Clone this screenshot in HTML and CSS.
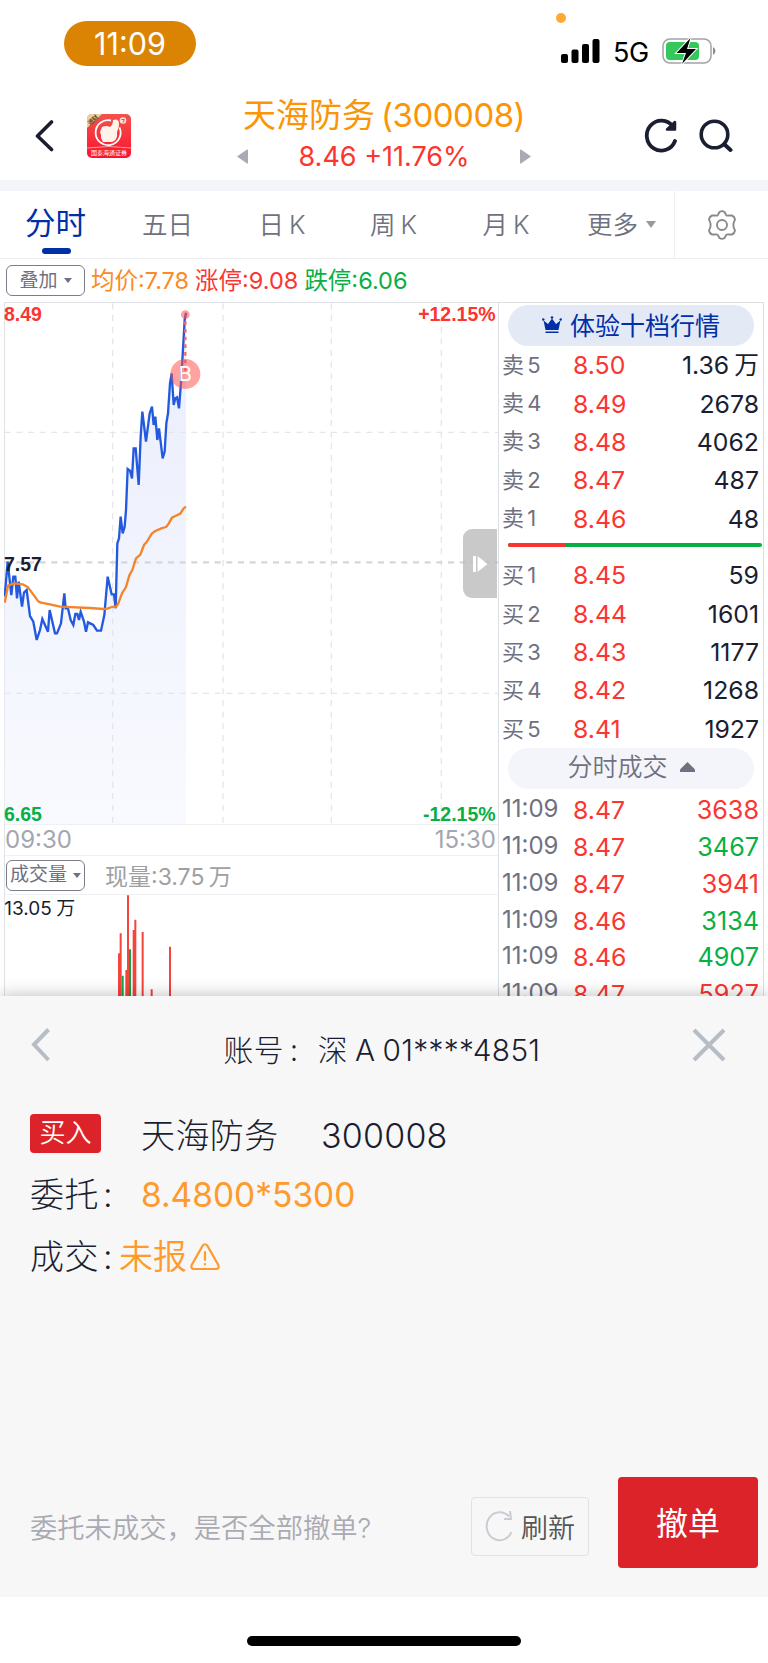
FILE: index.html
```html
<!DOCTYPE html>
<html lang="zh-CN">
<head>
    <meta charset="UTF-8">
    <meta name="viewport" content="width=device-width, initial-scale=1.0">
    <title>天海防务(300008)</title>
    <link rel="stylesheet" href="styles.css">
</head>
<body>

    <div class="status">
        <div class="clock">11:09</div>
        <i class="mic-dot"></i>
        <div class="status-right">
            <svg class="signal" width="39" height="25" viewBox="0 0 39 25">
                <rect x="0" y="15" width="7" height="9" rx="2"/>
                <rect x="10.500" y="10.500" width="7" height="13.500" rx="2"/>
                <rect x="21" y="5" width="7" height="19" rx="2"/>
                <rect x="31.500" y="0" width="7" height="24" rx="2"/>
            </svg>
            <span class="net">5G</span>
            <svg width="55" height="28" viewBox="0 0 55 28">
                <rect x="1" y="2" width="48" height="24" rx="7" fill="#fff" stroke="#a3a3a3" stroke-width="1.500"/>
                <rect x="4" y="5" width="33" height="18" rx="4" fill="#34c759"/>
                <path d="M51 10a4.500 4.500 0 0 1 0 8z" fill="#8c8c8c"/>
                <path d="M28.500 1 14.500 16h9.500l-4 11 14-15h-9z" fill="#000" stroke="#fff" stroke-width="2" paint-order="stroke"/>
            </svg>
        </div>
    </div>

    <header class="header">
        <div class="header-left">
            <svg width="20" height="34" viewBox="0 0 20 34"><path d="M17.500 3 3.500 17l14 13.500" class="ink" stroke-width="3.600"/></svg>
            <svg width="44" height="44" viewBox="0 0 44 44">
                <defs>
                    <linearGradient id="logoBg" x1="0" y1="0" x2="0" y2="1">
                        <stop offset="0" stop-color="#f4524b"/><stop offset="1" stop-color="#f9142d"/>
                    </linearGradient>
                    <clipPath id="logoClip"><rect width="44" height="44" rx="5"/></clipPath>
                </defs>
                <g clip-path="url(#logoClip)">
                    <rect width="44" height="44" fill="url(#logoBg)"/>
                    <path d="M0 0h15L0 14z" fill="#ecd3a4"/>
                    <path d="M24 6.500a12.500 12.500 0 1 0 8.500 7" fill="none" stroke="#fff" stroke-width="1.800"/>
                    <path d="M15 13q4-2 8 0 3-2 3-7 6-2 6 4 0 4-2 8 1 8-5 10h-9l-2-4v-3l-1-3z" fill="#fff4ec"/>
                    <circle cx="36" cy="6.500" r="3.300" fill="#ffdada"/>
                    <path d="M34.500 5.500h3L36 8.500" stroke="#f4524b" fill="none"/>
                    <path d="M0 34q22-3 44 0" fill="none" stroke="#ff9c9c"/>
                </g>
                <text x="6" y="8" class="logo-tag" transform="rotate(-43 6 6)">通财</text>
                <text x="22" y="41.300" class="logo-name">国泰海通证券</text>
            </svg>
        </div>
        <div class="title">
            <h1>天海防务<span>(300008)</span></h1>
            <div class="quote">
                <svg width="12" height="15" viewBox="0 0 12 15"><path d="M0 7.500 10 .5q1-.5 1 1v12q0 1.500-1 1z" fill="#a9aab2"/></svg>
                <span>8.46 +11.76%</span>
                <svg width="12" height="15" viewBox="0 0 12 15"><path d="M12 7.500 2 .5q-1-.5-1 1v12q0 1.500 1 1z" fill="#a9aab2"/></svg>
            </div>
        </div>
        <div class="header-right">
            <svg width="34" height="36" viewBox="0 0 34 36">
                <path d="M31 23A14.600 15 0 1 1 29 8.500" class="ink" stroke-width="3.800"/>
                <path d="M31 4v7.500h-8z" fill="#1a1e30" stroke="#1a1e30" stroke-width="2.500" stroke-linejoin="round"/>
            </svg>
            <svg width="34" height="34" viewBox="0 0 34 34">
                <circle cx="15.500" cy="15.500" r="13.300" class="ink" stroke-width="3.600"/>
                <path d="m25.500 25.500 6 5.500" class="ink" stroke-width="4"/>
            </svg>
        </div>
    </header>

    <nav class="tabs">
        <a class="tab active">分时</a>
        <a class="tab">五日</a>
        <a class="tab">日 K</a>
        <a class="tab">周 K</a>
        <a class="tab">月 K</a>
        <a class="tab more">更多<svg width="10" height="7" viewBox="0 0 10 7"><path d="M0 0h10L5 7z" fill="#999"/></svg></a>
        <a class="settings">
            <svg width="30" height="30" viewBox="0 0 30 30" fill="none" stroke="#8a8a8a" stroke-width="1.900">
                <path d="M12.500 2Q15 .2 17.500 2L19 4.800Q20 6 22 5.500L25 5.500Q27.500 6.500 28 9.500L26.800 12.500Q26 15 26.800 17.500L28 20.500Q27.500 23.500 25 24.500L22 24.500Q20 24 19 25.200L17.500 28Q15 29.800 12.500 28L11 25.200Q10 24 8 24.500L5 24.500Q2.500 23.500 2 20.500L3.200 17.500Q4 15 3.200 12.500L2 9.500Q2.500 6.500 5 5.500L8 5.500Q10 6 11 4.800Z"/>
                <circle cx="15" cy="15" r="5"/>
            </svg>
        </a>
    </nav>

    <div class="info">
        <button class="pick">叠加<svg width="8" height="5" viewBox="0 0 8 5"><path d="M0 0h8L4 5z"/></svg></button>
        <span class="avg">均价:7.78</span>
        <span class="up">涨停:9.08</span>
        <span class="down">跌停:6.06</span>
    </div>

    <main class="market">
        <section class="charts">
            <!-- intraday price chart, 3 units per pixel -->
            <svg class="price-chart" width="494" height="522" viewBox="12 6 1482 1566">
                <defs>
                    <linearGradient id="area" x1="0" y1="0" x2="0" y2="1">
                        <stop offset="0" stop-color="#eaeefc"/><stop offset="1" stop-color="#f9faff"/>
                    </linearGradient>
                </defs>
                <path fill="url(#area)" d="M14 890 23 785 34 885 40 830 46 830 51 895 56 845 66 920 72 878 80 870 90 948 100 965 110 1020 120 990 127 957 144 995 149 930 165 1000 171 1000 183 970 193 880 197 925 204 925 212 960 220 975 226 942 232 942 237 960 242 935 252 965 258 995 264 967 280 975 291 992 303 992 313 945 323 830 335 883 342 883 347 925 352 730 357 715 362 650 368 700 374 680 378 630 383 507 390 512 396 535 401 445 407 445 416 555 422 410 427 335 438 425 449 340 456 320 461 375 466 350 472 420 477 385 488 475 494 455 499 370 504 340 510 250 515 220 521 315 526 295 531 292 537 325 544 235 554 60 558 38V1572H14z"/>
                <g class="grid">
                    <path d="M338 10V1572M669 10V1572M994 10V1572M1324 10V1572" stroke-dasharray="18 17"/>
                    <path d="M14 397H1494M14 1180H1494" stroke-dasharray="18 17"/>
                    <path d="M14 787H1494" class="mid" stroke-dasharray="18 17"/>
                </g>
                <polyline class="line price" points="14,890 23,785 34,885 40,830 46,830 51,895 56,845 66,920 72,878 80,870 90,948 100,965 110,1020 120,990 127,957 144,995 149,930 165,1000 171,1000 183,970 193,880 197,925 204,925 212,960 220,975 226,942 232,942 237,960 242,935 252,965 258,995 264,967 280,975 291,992 303,992 313,945 323,830 335,883 342,883 347,925 352,730 357,715 362,650 368,700 374,680 378,630 383,507 390,512 396,535 401,445 407,445 416,555 422,410 427,335 438,425 449,340 456,320 461,375 466,350 472,420 477,385 488,475 494,455 499,370 504,340 510,250 515,220 521,315 526,295 531,292 537,325 544,235 554,60 558,38"/>
                <polyline class="line mean" points="14,908 24,857 42,850 68,853 84,862 100,884 115,904 123,908 150,913 180,920 270,924 310,927 322,926 335,921 349,920 355,910 366,880 378,861 388,826 397,810 408,775 421,764 432,735 440,726 456,700 466,693 484,685 498,681 506,671 516,653 526,648 541,641 551,625 558,620"/>
                <path d="M556 64V215" stroke="#f5656c" stroke-width="7" stroke-dasharray="11 12"/>
                <circle cx="556" cy="44" r="13" fill="#ff4f4a" fill-opacity=".55"/>
                <circle cx="556" cy="222" r="45" fill="#ff4f4a" fill-opacity=".52"/>
                <text x="556" y="243" class="mark">B</text>
                <text x="12" y="62" class="tick red">8.49</text>
                <text x="12" y="812" class="tick">7.57</text>
                <text x="12" y="1562" class="tick green">6.65</text>
                <text x="1487" y="62" class="tick red end">+12.15%</text>
                <text x="1487" y="1562" class="tick green end">-12.15%</text>
            </svg>
            <div class="times"><span>09:30</span><span>15:30</span></div>
            <div class="volume-head">
                <button class="pick">成交量<svg width="8" height="5" viewBox="0 0 8 5"><path d="M0 0h8L4 5z"/></svg></button>
                <span>现量:3.75 万</span>
            </div>
            <svg class="volume-chart" width="494" height="101" viewBox="12 315 1482 303">
                <path class="vol-up" d="M357 490V618M362 430V618M379 540V618M384 316V618M401 420V618M406 389V618M428 426V618M455 598V618M510 470V618"/>
                <path class="vol-down" d="M368 557V618M390 478V618"/>
                <text x="13" y="374" class="vol-max">13.05 万</text>
            </svg>
            <button class="expand">
                <svg width="16" height="18" viewBox="0 0 16 18" fill="#fff"><path d="M1 1h3v16H1zM5.500 1 15.500 9 5.500 17z"/></svg>
            </button>
        </section>

        <aside class="book">
            <div class="pill vip">
                <svg width="20" height="18" viewBox="0 0 20 18" fill="#0030a8">
                    <path d="m1.500 4.500 4.500 3.500L10 2.500l4 5.500 4.500-3.500L16.500 14h-13zM3.500 15.500h13V17h-13z"/>
                    <circle cx="10" cy="1.500" r="1.300"/><circle cx="1.300" cy="3.500" r="1.200"/><circle cx="18.700" cy="3.500" r="1.200"/>
                </svg>
                体验十档行情
            </div>
            <div class="rows sell">
                <div class="row"><span>卖 5</span><b>8.50</b><em>1.36 万</em></div>
                <div class="row"><span>卖 4</span><b>8.49</b><em>2678</em></div>
                <div class="row"><span>卖 3</span><b>8.48</b><em>4062</em></div>
                <div class="row"><span>卖 2</span><b>8.47</b><em>487</em></div>
                <div class="row"><span>卖 1</span><b>8.46</b><em>48</em></div>
            </div>
            <div class="ratio"><i></i></div>
            <div class="rows buy">
                <div class="row"><span>买 1</span><b>8.45</b><em>59</em></div>
                <div class="row"><span>买 2</span><b>8.44</b><em>1601</em></div>
                <div class="row"><span>买 3</span><b>8.43</b><em>1177</em></div>
                <div class="row"><span>买 4</span><b>8.42</b><em>1268</em></div>
                <div class="row"><span>买 5</span><b>8.41</b><em>1927</em></div>
            </div>
            <div class="pill deals">分时成交<svg width="15" height="10" viewBox="0 0 15 10"><path d="M7.500 0 15 7.500V10H0V7.500z" fill="#6f7180"/></svg></div>
            <div class="rows trades">
                <div class="row"><span>11:09</span><b>8.47</b><em class="up">3638</em></div>
                <div class="row"><span>11:09</span><b>8.47</b><em class="down">3467</em></div>
                <div class="row"><span>11:09</span><b>8.47</b><em class="up">3941</em></div>
                <div class="row"><span>11:09</span><b>8.46</b><em class="down">3134</em></div>
                <div class="row"><span>11:09</span><b>8.46</b><em class="down">4907</em></div>
                <div class="row"><span>11:09</span><b>8.47</b><em class="up">5927</em></div>
            </div>
        </aside>
    </main>

    <section class="sheet">
        <div class="sheet-head">
            <svg width="20" height="36" viewBox="0 0 20 36"><path d="M17.500 2.500 3 17.500l14.500 15.500" class="soft"/></svg>
            <h2>账号<i>:</i><span>深 A 01****4851</span></h2>
            <svg width="34" height="34" viewBox="0 0 34 34"><path d="m2 2 30 30M32 2 2 32" class="soft"/></svg>
        </div>
        <div class="order">
            <div class="line-name"><span class="badge">买入</span><span class="name">天海防务</span><span class="code">300008</span></div>
            <div class="line-price"><span class="key">委托</span><span class="colon">:</span><span class="orange amount">8.4800*5300</span></div>
            <div class="line-deal"><span class="key">成交</span><span class="colon">:</span><span class="orange">未报</span>
                <svg width="30" height="28" viewBox="0 0 30 28" fill="none" stroke="#ff9a2c" stroke-width="2.200" stroke-linecap="round">
                    <path d="M12.800 2.500q2.200-2.500 4.400 0L28.300 22q1.300 4-2.300 4H4q-3.600 0-2.300-4z"/>
                    <path d="M15 9v8M15 21.200v.3"/>
                </svg>
            </div>
        </div>
        <div class="actions">
            <p>委托未成交，是否全部撤单?</p>
            <button class="refresh">
                <svg width="28" height="31" viewBox="0 0 28 31" fill="none" stroke="#c9cdd3" stroke-width="2"><path d="M26.500 21A13 14 0 1 1 24 5.500M25 0l1 8h-7"/></svg>
                刷新
            </button>
            <button class="cancel">撤单</button>
        </div>
    </section>

    <footer class="home"><i></i></footer>

</body>
</html>
```

FILE: styles.css
```css
* {
    box-sizing: border-box;
}
body {
    margin: 0;
    width: 768px;
    height: 1663px;
    overflow: hidden;
    background: #fff;
    color: #1a1e30;
    font-family: Inter, "Noto Sans CJK SC", sans-serif;
    font-weight: 350;
}
svg { display: block; flex: none; }
h1, h2, p { margin: 0; font-weight: 350; }
button {
    padding: 0;
    background: none;
    border: none;
    font: inherit;
    color: inherit;
}
.ink {
    fill: none;
    stroke: #1a1e30;
    stroke-linecap: round;
    stroke-linejoin: round;
}
.soft { fill: none; stroke: #b7bdc4; stroke-width: 4; }
.up { color: #fb352f; }
.down { color: #08b044; }

/* status bar */
.status {
    position: relative;
    height: 90px;
    display: flex;
    justify-content: space-between;
    padding: 21px 51px 0 64px;
}
.clock {
    width: 132px;
    height: 45px;
    line-height: 46px;
    border-radius: 23px;
    background: #db8403;
    color: #fff;
    font-size: 30.500px;
    font-weight: 400;
    text-align: center;
}
.mic-dot {
    position: absolute;
    left: 556px;
    top: 13px;
    width: 10px;
    height: 10px;
    border-radius: 50%;
    background: #ffab33;
}
.status-right {
    display: flex;
    align-items: center;
    height: 60px;
}
.net {
    margin: 2px 13px 0 13px;
    width: 36px;
    color: #000;
    font-size: 27px;
    font-weight: 400;
    letter-spacing: -0.3px;
}

/* header */
.header {
    height: 101px;
    display: flex;
    justify-content: space-between;
    border-bottom: 11px solid #f3f5fa;
    padding: 0 35px 0 34px;
}
.header-left {
    display: flex;
    align-items: center;
    gap: 33px;
    width: 176px;
    height: 92px;
}
.title { flex: 1; }
.title h1 {
    margin: 6px 0 0 33px;
    height: 40px;
    line-height: 38px;
    font-size: 33px;
    font-weight: 400;
    color: #fb9505;
    white-space: nowrap;
}
.title h1 span { margin-left: 6px; letter-spacing: -0.5px; }
.quote {
    display: flex;
    align-items: center;
    margin-left: 27px;
    width: 294px;
    justify-content: space-between;
    height: 40px;
    color: #fb352f;
    font-size: 27px;
    font-weight: 400;
}
.logo-tag { font-size: 6px; fill: #6b4b1c; text-anchor: middle; font-weight: 700; }
.logo-name { font-size: 6px; fill: #fff; text-anchor: middle; font-weight: 400; }
.header-right {
    display: flex;
    align-items: center;
    gap: 21px;
    height: 92px;
}

/* period tabs */
.tabs {
    display: grid;
    grid-template-columns: 111px 113px 116px 107px 118px 109px 94px;
    height: 68px;
    border-bottom: 1px solid #eceef0;
    color: #6f7180;
    font-size: 25.500px;
    word-spacing: -2px;
}
.tab {
    text-align: center;
    line-height: 67px;
    white-space: nowrap;
}
.tab.active {
    position: relative;
    color: #0030a8;
    font-size: 30.500px;
    font-weight: 400;
    line-height: 63px;
}
.tab.active::after {
    content: "";
    position: absolute;
    left: 42px;
    bottom: 4px;
    width: 29px;
    height: 6px;
    border-radius: 3px;
    background: #0030a8;
}
.tab.more {
    display: flex;
    align-items: center;
    gap: 8px;
    padding-left: 22px;
}
.settings {
    display: flex;
    align-items: center;
    justify-content: center;
    border-left: 1px solid #eceef0;
}

/* info line */
.info {
    display: flex;
    align-items: center;
    height: 43px;
    padding-left: 6px;
    font-size: 23.500px;
    font-weight: 400;
    line-height: 43px;
    white-space: nowrap;
}
.info span { margin-left: 6px; }
.avg { color: #fb8a22; }
.pick {
    display: flex;
    align-items: center;
    justify-content: center;
    gap: 6px;
    width: 79px;
    height: 31px;
    border: 1.500px solid #7b7d89;
    border-radius: 6px;
    color: #6f7180;
    font-size: 19px;
    font-weight: 400;
    line-height: 30px;
    white-space: nowrap;
}
.pick path { fill: #6f7180; }

/* charts + order book */
.market {
    display: flex;
    height: 694px;
    padding-left: 4px;
    overflow: hidden;
}
.charts {
    position: relative;
    width: 494px;
    border-top: 1px solid #dfe2e6;
    border-left: 1px solid #dfe2e6;
}
.price-chart, .volume-chart { margin-left: -1px; }
.price-chart { margin-top: -1px; }
.grid path { fill: none; stroke: #e4e6e9; stroke-width: 4; }
.grid .mid { stroke: #d3d6da; stroke-width: 7; }
.line { fill: none; stroke-width: 7; stroke-linejoin: miter; }
.price { stroke: #2259df; }
.mean { stroke: #f5832a; stroke-linejoin: round; }
.mark { fill: #fff; font-size: 60px; font-weight: 400; text-anchor: middle; }
.tick {
    font-family: "Liberation Sans", Arial, sans-serif;
    font-size: 58.500px;
    font-weight: 700;
    fill: #1a1e30;
}
.tick.red { fill: #fb352f; }
.tick.green { fill: #08b044; }
.end { text-anchor: end; }
.times {
    display: flex;
    justify-content: space-between;
    height: 31px;
    padding: 0 2px 0 0;
    border-top: 1px solid #eef0f3;
    line-height: 29px;
    font-size: 24px;
    font-weight: 400;
    color: #a5a6af;
}
.volume-head {
    display: flex;
    align-items: center;
    height: 40px;
    padding: 0 0 0 1px;
    border-top: 1px solid #eef0f3;
    border-bottom: 1px solid #eef0f3;
    color: #a0a0a3;
    font-size: 23px;
    font-weight: 400;
    word-spacing: -2px;
}
.volume-head .pick { gap: 6px; }
.volume-head span { margin-left: 20px; }
.vol-up, .vol-down { stroke-width: 6; stroke: #f5433e; }
.vol-down { stroke: #0fa345; }
.vol-max { font-size: 57px; font-weight: 400; fill: #1a1e30; word-spacing: -3px; }
.expand {
    position: absolute;
    right: 1px;
    top: 226px;
    width: 34px;
    height: 69px;
    padding-left: 9px;
    border-radius: 9px 0 0 9px;
    background: rgba(188, 188, 188, .8);
}

.book {
    width: 266px;
    border: 1px solid #dcdfe4;
    border-bottom: none;
}
.pill {
    display: flex;
    align-items: center;
    justify-content: center;
    width: 246px;
    height: 41px;
    line-height: 40px;
    margin-left: 9px;
    border-radius: 21px;
}
.vip {
    margin-top: 2px;
    gap: 8px;
    background: #e4e9f6;
    color: #0030a8;
    font-size: 25px;
    font-weight: 400;
}
.vip svg { margin-top: -1px; }
.deals {
    gap: 12px;
    padding-bottom: 2px;
    background: #f4f5fa;
    color: #6f7180;
    font-size: 25px;
}
.row {
    display: grid;
    grid-template-columns: 71px 70px 1fr;
    align-items: center;
    height: 38.400px;
    line-height: 38px;
    padding: 0 4px 0 3px;
    white-space: nowrap;
    word-spacing: -2px;
    font-weight: 400;
}
.row span { font-size: 22px; color: #6f7180; word-spacing: -3px; }
.row b { font-size: 24.800px; font-weight: 400; color: #fb352f; }
.row em { font-size: 24.800px; font-style: normal; text-align: right; }
.row span, .row b, .row em { position: relative; }
.sell .row span { margin-top: -1px; }
.ratio {
    margin: 5px 1px 9px 9px;
    height: 4px;
    border-radius: 2px;
    background: #08b044;
    overflow: hidden;
}
.ratio i {
    display: block;
    width: 58px;
    height: 4px;
    background: #fb352f;
}
.trades { margin-top: 3px; }
.trades .row { height: 36.800px; line-height: 36px; }
.trades .row span { font-size: 24px; margin-top: -2px; }
.trades .row em { font-size: 25.200px; }

/* order sheet */
.sheet {
    position: relative;
    height: 601px;
    background: #f7f7f7;
    box-shadow: 0 0 16px rgba(0, 0, 0, .28);
    font-feature-settings: "calt" 0;
    font-weight: 300;
}
.sheet-head {
    display: flex;
    align-items: center;
    justify-content: space-between;
    height: 98px;
    padding: 0 42px 0 31px;
}
.sheet-head h2 {
    font-size: 29.800px;
    line-height: 40px;
    font-weight: 300;
    margin: 9px 0 0 21px;
    white-space: nowrap;
    letter-spacing: 0.3px;
    word-spacing: -1.500px;
}
.sheet-head h2 i {
    display: inline-block;
    width: 34px;
    padding-left: 6px;
    font-style: normal;
}
.order {
    padding: 2px 0 0 30px;
    font-size: 34px;
    white-space: nowrap;
}
.order > div {
    display: flex;
    align-items: center;
    line-height: 40px;
}
.order .line-name { height: 79px; }
.order .line-price { height: 40px; }
.order .line-deal { height: 84px; }
.badge {
    width: 71px;
    height: 39px;
    margin: -4px 40px 0 0;
    border-radius: 4px;
    background: #dc2329;
    color: #fff;
    font-size: 26px;
    line-height: 38px;
    text-align: center;
    font-weight: 350;
}
.name { width: 180px; letter-spacing: 0.4px; }
.code { letter-spacing: 0.2px; }
.key { width: 69px; letter-spacing: 0.4px; }
.colon { width: 20px; padding-left: 4px; }
.line-price .colon { width: 42px; }
.orange { color: #ff9a2c; font-weight: 350; }
.amount { font-size: 33.500px; font-weight: 400; }
.line-deal svg { margin: 0 0 0 3px; }
.actions {
    display: flex;
    align-items: center;
    height: 91px;
    margin-top: 178px;
    padding: 0 10px 0 30px;
}
.actions p {
    width: 441px;
    padding-top: 7px;
    color: #a9aab2;
    font-size: 27.300px;
    font-weight: 350;
    white-space: nowrap;
}
.refresh {
    display: flex;
    align-items: center;
    justify-content: center;
    gap: 8px;
    width: 118px;
    height: 59px;
    margin: 8px 29px 0 0;
    border: 1.500px solid #dfe2e6;
    border-radius: 4px;
    color: #555;
    font-size: 27px;
    font-weight: 350;
    white-space: nowrap;
}
.cancel {
    width: 140px;
    height: 91px;
    padding-bottom: 3px;
    border-radius: 4px;
    background: #dc2329;
    color: #fff;
    font-size: 32px;
    font-weight: 400;
}

.home {
    position: relative;
    height: 66px;
    padding-top: 39px;
    background: #fff;
}
.home i {
    display: block;
    width: 274px;
    height: 10px;
    margin: 0 auto;
    border-radius: 5px;
    background: #000;
}
```
